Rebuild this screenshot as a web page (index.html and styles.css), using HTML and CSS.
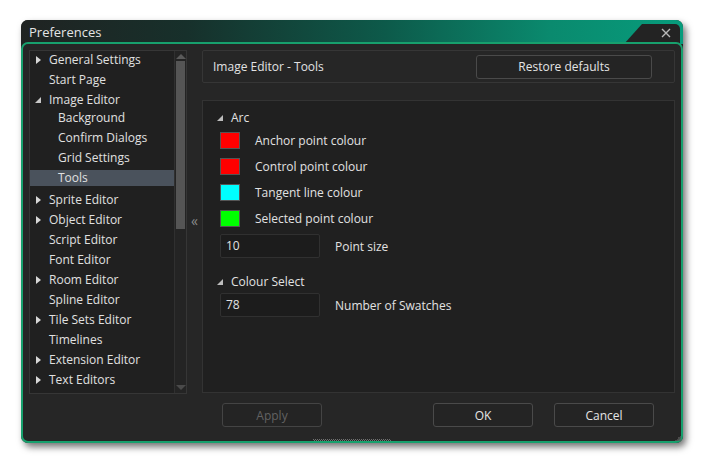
FILE: index.html
```html
<!DOCTYPE html>
<html>
<head>
<meta charset="utf-8">
<link rel="stylesheet" href="styles.css">
</head>
<body>
<div class="page">
  <div class="window">
    <div class="titlebar">
      <span class="title">Preferences</span>
      <div class="notch">
        <svg class="close" width="10" height="10" viewBox="0 0 10 10"><path d="M1 1L9 9M9 1L1 9" stroke="#b8b8b8" stroke-width="1.4" fill="none"/></svg>
      </div>
    </div>
    <div class="frame">
      <div class="main">
        <div class="tree">
          <div class="items">
            <div class="item top"><span class="arrow closed"></span>General Settings</div>
            <div class="item top"><span class="arrow none"></span>Start Page</div>
            <div class="item top"><span class="arrow open"></span>Image Editor</div>
            <div class="item sub"><span class="lbl">Background</span></div>
            <div class="item sub"><span class="lbl">Confirm Dialogs</span></div>
            <div class="item sub"><span class="lbl">Grid Settings</span></div>
            <div class="item sub selected"><span class="lbl">Tools</span></div>
            <div class="item top"><span class="arrow closed"></span>Sprite Editor</div>
            <div class="item top"><span class="arrow closed"></span>Object Editor</div>
            <div class="item top"><span class="arrow none"></span>Script Editor</div>
            <div class="item top"><span class="arrow none"></span>Font Editor</div>
            <div class="item top"><span class="arrow closed"></span>Room Editor</div>
            <div class="item top"><span class="arrow none"></span>Spline Editor</div>
            <div class="item top"><span class="arrow closed"></span>Tile Sets Editor</div>
            <div class="item top"><span class="arrow none"></span>Timelines</div>
            <div class="item top"><span class="arrow closed"></span>Extension Editor</div>
            <div class="item top"><span class="arrow closed"></span>Text Editors</div>
          </div>
          <div class="scrollbar">
            <span class="sarrow up"></span>
            <div class="track"><div class="thumb"></div></div>
            <span class="sarrow down"></span>
          </div>
        </div>
        <div class="gutter"><span class="collapse">«</span></div>
        <div class="right">
          <div class="header">
            <span class="htitle">Image Editor - Tools</span>
            <button class="btn restore">Restore defaults</button>
          </div>
          <div class="content">
            <div class="section"><span class="tri"></span>Arc</div>
            <div class="crow"><span class="swatch red"></span><span class="clabel">Anchor point colour</span></div>
            <div class="crow"><span class="swatch red"></span><span class="clabel">Control point colour</span></div>
            <div class="crow"><span class="swatch cyan"></span><span class="clabel">Tangent line colour</span></div>
            <div class="crow"><span class="swatch green"></span><span class="clabel">Selected point colour</span></div>
            <div class="irow"><span class="input">10</span><span class="ilabel">Point size</span></div>
            <div class="section s2"><span class="tri"></span>Colour Select</div>
            <div class="irow r2"><span class="input">78</span><span class="ilabel">Number of Swatches</span></div>
          </div>
        </div>
      </div>
      <div class="buttons">
        <button class="btn apply">Apply</button>
        <span class="spacer"></span>
        <button class="btn ok">OK</button>
        <button class="btn cancel">Cancel</button>
      </div>
      <div class="grip"></div>
      <div class="resize"></div>
    </div>
  </div>
</div>
</body>
</html>
```

FILE: styles.css
```css
* { box-sizing: border-box; }
html, body { margin: 0; padding: 0; background: #ffffff; }
body { font-family: "Open Sans", "DejaVu Sans", sans-serif; font-size: 12px; color: #e2e2e2; }
.page { padding: 20px 0 0 21px; width: 703px; height: 463px; }
.window {
  width: 662px; height: 423px;
  display: flex; flex-direction: column;
  border-radius: 7px;
  box-shadow: 3px 4px 7px rgba(0,0,0,0.55);
  background: #262626;
}
.titlebar {
  position: relative;
  height: 24px;
  margin-bottom: -2px;
  border-radius: 7px 7px 0 0;
  background: linear-gradient(to right, #202322 0%, #17302b 25%, #0d5a4a 55%, #0a8a6e 80%, #079c7c 100%);
  padding: 3px 0 0 8px;
}
.title { font-size: 13px; color: #e4e4e4; line-height: 18px; }
.notch {
  position: absolute; top: 4px; right: 3px;
  width: 56px; height: 20px;
  background: #232323;
  clip-path: polygon(18px 0, 100% 0, 100% 100%, 0 100%);
  border-top-right-radius: 5px;
}
.close { position: absolute; right: 9px; top: 4px; }
.frame {
  position: relative;
  flex: 1;
  border: 2px solid #17a06d;
  border-radius: 7px;
  background: #262626;
  padding: 6px 6px 0 6px;
  display: flex; flex-direction: column;
}
.main { display: flex; height: 344px; }
.tree {
  width: 158px;
  display: flex;
  background: #202020;
  border: 1px solid #363636;
}
.items { flex: 1; margin-top: -1px; }
.item { height: 20px; line-height: 20px; white-space: nowrap; color: #e0e0e0; }
.item.top { padding-left: 5px; display: flex; align-items: center; }
.item.sub { line-height: 16px; }
.item.sub .lbl { display: block; height: 16px; padding-left: 28px; }
.item.selected .lbl { background: #4a525c; }
.arrow { display: inline-block; width: 14px; height: 20px; position: relative; }
.arrow.closed::before {
  content: ""; position: absolute; left: 1px; top: 6px;
  border-left: 5px solid #d8d8d8; border-top: 4px solid transparent; border-bottom: 4px solid transparent;
}
.arrow.open::before {
  content: ""; position: absolute; left: 0; top: 7px;
  border-right: 6px solid #c8c8c8; border-top: 6px solid transparent;
}
.scrollbar {
  width: 12px; display: flex; flex-direction: column; align-items: center;
  background: #242424; border-left: 1px solid #303030;
}
.sarrow { width: 0; height: 0; margin: 3px 0 2px; }
.sarrow.up { border-left: 5px solid transparent; border-right: 5px solid transparent; border-bottom: 5px solid #5a5a5a; }
.sarrow.down { border-left: 5px solid transparent; border-right: 5px solid transparent; border-top: 5px solid #4a4a4a; margin: 2px 0 3px; }
.track { flex: 1; width: 100%; padding: 0 1px; }
.thumb { height: 168px; background: #555555; }
.gutter { width: 15px; display: flex; align-items: flex-start; justify-content: center; }
.collapse { margin-top: 163px; color: #8a8a8a; font-size: 14px; line-height: 16px; }
.right { flex: 1; display: flex; flex-direction: column; padding-bottom: 1px; }
.header {
  height: 33px; border: 1px solid #363636; border-radius: 2px;
  display: flex; align-items: center; justify-content: space-between;
  padding: 0 22px 0 10px; margin-bottom: 17px;
}
.htitle { color: #e2e2e2; }
.btn {
  font-family: "Open Sans", "DejaVu Sans", sans-serif; font-size: 12px;
  background: #242424; color: #e4e4e4;
  border: 1px solid #4a4a4a; border-radius: 3px;
  height: 24px; width: 100px; padding: 0; cursor: default;
}
.restore { width: 176px; height: 24px; }
.content {
  flex: 1; background: #202020; border: 1px solid #333333;
  padding: 8px 0 0 13px;
}
.section { height: 18px; line-height: 18px; display: flex; align-items: center; }
.tri { display: inline-block; width: 0; height: 0; border-right: 6px solid #bdbdbd; border-top: 6px solid transparent; margin: 0 8px 0 1px; }
.crow { height: 26px; display: flex; align-items: center; padding-left: 4px; }
.swatch { width: 20px; height: 17px; border: 1px solid #555; margin-right: 15px; }
.swatch.red { background: #ff0000; }
.swatch.cyan { background: #00ffff; }
.swatch.green { background: #00ff00; }
.irow { display: flex; align-items: center; padding-left: 4px; margin-top: 3px; margin-bottom: 15px; }
.irow.r2 { margin-top: 2px; }
.input {
  width: 100px; height: 24px; line-height: 22px; padding-left: 5px;
  background: #1c1c1c; border: 1px solid #303030; border-radius: 2px; margin-right: 15px;
}
.buttons { display: flex; margin-top: 9px; padding: 0 21px 0 20px; margin-left: 173px; gap: 21px; }
.spacer { flex: 1; }
.apply { color: #626262; border-color: #444; }
.grip {
  position: absolute; left: 290px; bottom: 0; width: 78px; height: 2px;
  background-image:
    repeating-linear-gradient(90deg, #707070 0 1px, transparent 1px 2px),
    repeating-linear-gradient(90deg, transparent 0 1px, #707070 1px 2px);
  background-size: 100% 1px, 100% 1px;
  background-position: 0 0, 0 1px;
  background-repeat: no-repeat;
}
.resize {
  position: absolute; right: 0; bottom: 0; width: 6px; height: 6px;
  background: linear-gradient(135deg, transparent 50%, #5a5a5a 50%);
  opacity: 0.7;
}
```
